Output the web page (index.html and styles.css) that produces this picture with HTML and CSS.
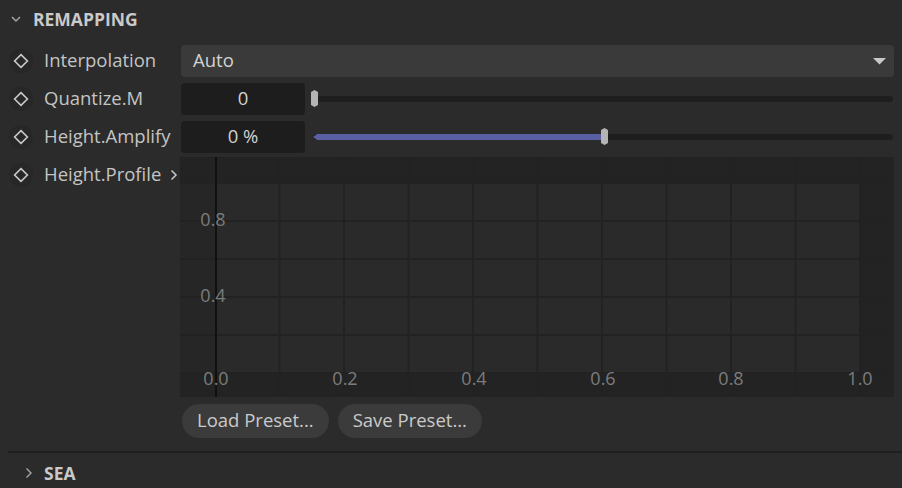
FILE: index.html
```html
<!DOCTYPE html>
<html>
<head>
<meta charset="utf-8">
<link rel="stylesheet" href="styles.css">
</head>
<body>
<div class="panel">
  <div class="section-head">
    <svg class="chev" width="10" height="8" viewBox="0 0 10 8"><path d="M1 2 L5 6 L9 2" fill="none" stroke="#a8a8a8" stroke-width="1.4"/></svg>
    <span class="section-title">REMAPPING</span>
  </div>

  <div class="rows">
    <div class="row">
      <div class="label">
        <span class="key"><svg width="16" height="16" viewBox="0 0 16 16"><path d="M8 1.6 L14.4 8 L8 14.4 L1.6 8 Z" fill="none" stroke="#c8c8c8" stroke-width="1.6"/></svg></span>
        <span class="name">Interpolation</span>
      </div>
      <div class="control">
        <div class="dropdown">
          <span class="dd-text">Auto</span>
          <svg width="13" height="7" viewBox="0 0 13 7"><path d="M0 0 H13 L6.5 6.5 Z" fill="#c8c8c8"/></svg>
        </div>
      </div>
    </div>

    <div class="row">
      <div class="label">
        <span class="key"><svg width="16" height="16" viewBox="0 0 16 16"><path d="M8 1.6 L14.4 8 L8 14.4 L1.6 8 Z" fill="none" stroke="#c8c8c8" stroke-width="1.6"/></svg></span>
        <span class="name">Quantize.M</span>
      </div>
      <div class="control">
        <div class="num">0</div>
        <div class="slider">
          <div class="track"></div>
          <div class="thumb" style="left: 0%"></div>
        </div>
      </div>
    </div>

    <div class="row">
      <div class="label">
        <span class="key"><svg width="16" height="16" viewBox="0 0 16 16"><path d="M8 1.6 L14.4 8 L8 14.4 L1.6 8 Z" fill="none" stroke="#c8c8c8" stroke-width="1.6"/></svg></span>
        <span class="name">Height.Amplify</span>
      </div>
      <div class="control">
        <div class="num">0 %</div>
        <div class="slider">
          <div class="track"></div>
          <div class="fill" style="width: 50%"></div>
          <div class="thumb" style="left: 50%"></div>
        </div>
      </div>
    </div>

    <div class="row graph-row">
      <div class="label">
        <span class="key"><svg width="16" height="16" viewBox="0 0 16 16"><path d="M8 1.6 L14.4 8 L8 14.4 L1.6 8 Z" fill="none" stroke="#c8c8c8" stroke-width="1.6"/></svg></span>
        <span class="name">Height.Profile</span>
        <svg class="more" width="8" height="12" viewBox="0 0 8 12"><path d="M1.5 1.5 L6 6 L1.5 10.5" fill="none" stroke="#c8c8c8" stroke-width="1.5"/></svg>
      </div>
      <div class="graph-col">
        <svg class="graph" width="714" height="240" viewBox="0 0 714 240">
          <rect x="0" y="0" width="714" height="240" fill="#232323"/>
          <rect x="0" y="26" width="35" height="190" fill="#262626"/>
          <rect x="37" y="26" width="643" height="190" fill="#2a2a2a"/>
          <g stroke="#222222" stroke-width="2">
            <line x1="99.5" y1="0" x2="99.5" y2="240"/>
            <line x1="164" y1="0" x2="164" y2="240"/>
            <line x1="228.5" y1="0" x2="228.5" y2="240"/>
            <line x1="293" y1="0" x2="293" y2="240"/>
            <line x1="357.5" y1="0" x2="357.5" y2="240"/>
            <line x1="422" y1="0" x2="422" y2="240"/>
            <line x1="486.5" y1="0" x2="486.5" y2="240"/>
            <line x1="551" y1="0" x2="551" y2="240"/>
            <line x1="615.5" y1="0" x2="615.5" y2="240"/>
            <line x1="680" y1="0" x2="680" y2="240"/>
            <line x1="0" y1="26" x2="714" y2="26"/>
            <line x1="0" y1="64" x2="714" y2="64"/>
            <line x1="0" y1="102" x2="714" y2="102"/>
            <line x1="0" y1="140" x2="714" y2="140"/>
            <line x1="0" y1="178" x2="714" y2="178"/>
            <line x1="0" y1="216" x2="714" y2="216"/>
          </g>
          <rect x="35" y="0" width="2" height="242" fill="#101010"/>
          <g class="ax" fill="#7c7c7c" text-anchor="middle">
            <text x="33" y="69">0.8</text>
            <text x="33" y="145">0.4</text>
            <text x="36" y="228">0.0</text>
            <text x="165" y="228">0.2</text>
            <text x="294" y="228">0.4</text>
            <text x="423" y="228">0.6</text>
            <text x="551" y="228">0.8</text>
            <text x="680" y="228">1.0</text>
          </g>
        </svg>
        <div class="buttons">
          <button class="btn">Load Preset...</button>
          <button class="btn">Save Preset...</button>
        </div>
      </div>
    </div>
  </div>

  <div class="sep"></div>

  <div class="section-head sub">
    <svg class="chev" width="8" height="12" viewBox="0 0 8 12"><path d="M1.5 1.5 L6 6 L1.5 10.5" fill="none" stroke="#a8a8a8" stroke-width="1.4"/></svg>
    <span class="section-title">SEA</span>
  </div>
</div>
</body>
</html>
```

FILE: styles.css
```css
html, body {
  margin: 0;
  padding: 0;
  background: #2b2b2b;
  width: 902px;
  height: 488px;
  overflow: hidden;
}

.panel {
  font-family: "Open Sans", "Noto Sans", sans-serif;
  color: #c4c4c4;
  font-size: 18.5px;
}

.section-head {
  height: 38px;
  display: flex;
  align-items: center;
  padding-left: 11px;
}

.section-head .chev {
  margin-right: 12px;
}

.section-title {
  font-weight: 700;
  font-size: 17.5px;
  color: #c9c9c9;
  padding-bottom: 1px;
}

.section-head.sub {
  height: 40px;
  padding-left: 25px;
}

.section-head.sub .chev {
  margin-right: 11px;
}

.rows {
  margin-top: 4px;
}

.row {
  display: flex;
  height: 38px;
  align-items: center;
}

.label {
  width: 181px;
  flex: none;
  display: flex;
  align-items: center;
  height: 36px;
}

.key {
  width: 24px;
  height: 24px;
  border-radius: 50%;
  background: #272727;
  margin-left: 9px;
  display: flex;
  align-items: center;
  justify-content: center;
}

.name {
  margin-left: 11px;
  white-space: nowrap;
  padding-bottom: 3px;
}

.more {
  margin-left: 9px;
}

.control {
  flex: 1;
  display: flex;
  align-items: center;
  margin-right: 8px;
  height: 32px;
}

.dropdown {
  flex: 1;
  height: 32px;
  background: #3a3a3a;
  border-radius: 4px;
  display: flex;
  align-items: center;
  justify-content: space-between;
  padding: 0 8px 0 12px;
}

.dd-text {
  color: #d2d2d2;
  padding-bottom: 3px;
}

.num {
  width: 124px;
  height: 32px;
  background: #1d1d1d;
  border-radius: 4px;
  display: flex;
  align-items: center;
  justify-content: center;
  color: #d2d2d2;
  padding-bottom: 3px;
  box-sizing: border-box;
}

.slider {
  flex: 1;
  position: relative;
  height: 32px;
  margin-left: 8px;
  margin-right: 1px;
}

.track {
  position: absolute;
  left: 0;
  right: 0;
  top: 13px;
  height: 6px;
  background: #1e1e1e;
  border-radius: 3px;
}

.fill {
  position: absolute;
  left: 0;
  top: 13px;
  height: 6px;
  background: #5a5ea2;
  clip-path: polygon(0 50%, 4px 0, 100% 0, 100% 100%, 4px 100%);
}

.thumb {
  position: absolute;
  top: 7px;
  width: 7px;
  height: 17px;
  margin-left: -2px;
  background: #b4b4b4;
  clip-path: polygon(50% 0, 100% 2px, 100% 15px, 50% 100%, 0 15px, 0 2px);
}

.graph-row {
  height: auto;
  align-items: flex-start;
  margin-top: 1px;
}

.graph-col {
  flex: 1;
  margin-right: 8px;
  margin-left: -1px;
}

.graph {
  display: block;
}

.ax text {
  font-family: "Open Sans", "Noto Sans", sans-serif;
  font-size: 18px;
}

.buttons {
  display: flex;
  gap: 9px;
  margin-top: 7px;
  margin-left: 2px;
}

.btn {
  height: 34px;
  border: none;
  border-radius: 17px;
  background: #3b3b3b;
  color: #cacaca;
  font-family: "Open Sans", "Noto Sans", sans-serif;
  font-size: 18.5px;
  padding: 0 15px 3px;
}

.sep {
  margin-top: 13px;
  margin-left: 8px;
  height: 2px;
  background: #1f1f1f;
}
```
